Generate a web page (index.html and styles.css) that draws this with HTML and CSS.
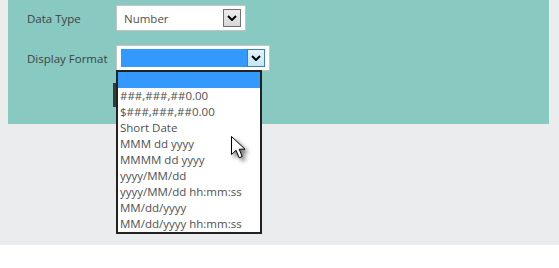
FILE: index.html
```html
<!DOCTYPE html>
<html lang="en">

<head>
    <meta charset="UTF-8">
    <title>Field settings</title>
    <link rel="stylesheet" href="styles.css">
</head>

<body>
    <div class="page">
        <div class="panel">
            <div class="form">
                <label class="lbl">Data Type</label>
                <div class="select narrow">
                    <span class="value">Number</span>
                    <span class="arrow"><svg width="10" height="6" viewBox="0 0 10 6"><path d="M1 1 L5 5 L9 1" fill="none" stroke="#000" stroke-width="2"/></svg></span>
                </div>

                <label class="lbl">Display Format</label>
                <div class="select wide">
                    <span class="value chosen"></span>
                    <span class="arrow focus"><svg width="10" height="6" viewBox="0 0 10 6"><path d="M1 1 L5 5 L9 1" fill="none" stroke="#000" stroke-width="2"/></svg></span>
                    <ul class="options">
                        <li class="on">&nbsp;</li>
                        <li>###,###,##0.00</li>
                        <li>$###,###,##0.00</li>
                        <li>Short Date</li>
                        <li>MMM dd yyyy</li>
                        <li>MMMM dd yyyy</li>
                        <li>yyyy/MM/dd</li>
                        <li>yyyy/MM/dd hh:mm:ss</li>
                        <li>MM/dd/yyyy</li>
                        <li>MM/dd/yyyy hh:mm:ss</li>
                    </ul>
                </div>

                <span></span>
                <button class="save" aria-label="Save"></button>
            </div>
        </div>

        <svg class="cursor" width="24" height="30" viewBox="0 0 24 30">
            <path d="M0.5 0.5 L0.5 18.5 L5 14.3 L8.2 21.8 L11.2 20.5 L8.2 13.2 L14 13.2 Z" fill="#fff" stroke="#000" stroke-width="1"/>
        </svg>
    </div>
</body>

</html>
```

FILE: styles.css
```css
body {
    margin: 0;
    background-color: white;
    font-family: "Open Sans", sans-serif;
    font-size: 11.5px;
}

.page {
    position: relative;
    height: 245px;
    padding: 0 10px 0 8px;
    background-color: #ebecee;
}

.panel {
    height: 124px;
    background-color: #88c9c1;
    padding-left: 19px;
    box-sizing: border-box;
}

.form {
    display: grid;
    grid-template-columns: 89px auto;
    row-gap: 14px;
    padding-top: 5px;
    align-items: center;
}

.lbl {
    color: #3b4443;
}

.select {
    position: relative;
    display: flex;
    align-items: center;
    height: 26px;
    box-sizing: border-box;
    padding: 3px 4px 3px 4px;
    border: 1px solid #c4c4c4;
    background-color: white;
}

.narrow {
    width: 130px;
    padding-left: 7px;
}

.wide {
    width: 154px;
}

.value {
    flex: 1;
    color: #505050;
}

.value.chosen {
    align-self: stretch;
    background-color: #3399ff;
}

.arrow {
    display: flex;
    align-items: center;
    justify-content: center;
    width: 18px;
    height: 18px;
    box-sizing: border-box;
    border: 1px solid #707070;
    background: linear-gradient(#ececec, #d8d8d8);
}

.arrow.focus {
    border-color: #3c7fb1;
    background: linear-gradient(#e5f4fc, #c4e5f6);
}

.options {
    position: absolute;
    left: -1px;
    top: 24px;
    z-index: 2;
    width: 146px;
    margin: 0;
    padding: 0;
    list-style: none;
    box-sizing: border-box;
    border: 2px solid #222;
    background-color: white;
}

.options li {
    height: 16px;
    line-height: 16px;
    padding-left: 2px;
    color: #505050;
    white-space: nowrap;
}

.options li.on {
    background-color: #3399ff;
}

.save {
    justify-self: start;
    width: 80px;
    height: 24px;
    margin: -2px 0 0 -3px;
    border: none;
    background-color: #3a3a3a;
}

.cursor {
    position: absolute;
    left: 231px;
    top: 136px;
    z-index: 3;
    filter: drop-shadow(3px 3px 2px rgba(0, 0, 0, 0.55));
}
```
